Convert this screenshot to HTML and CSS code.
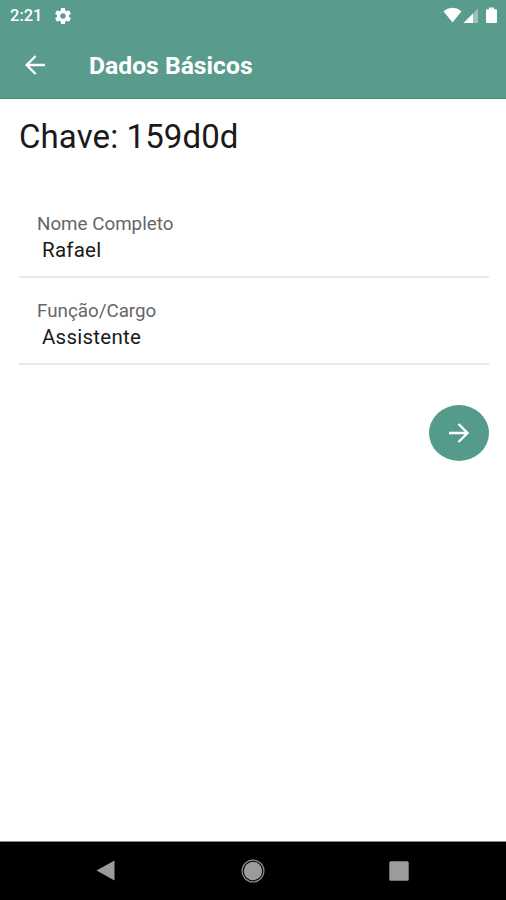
FILE: index.html
```html
<!DOCTYPE html>
<html lang="pt-BR">
  <head>
    <meta charset="UTF-8" />
    <meta name="viewport" content="width=device-width, initial-scale=1.0" />
    <title>Dados Básicos</title>
    <link rel="stylesheet" href="styles.css">
  </head>
  <body>
    <header>
      <div class="status-bar">
        <span class="time">2:21</span>
        <svg class="gear" viewBox="2 2 20 20" width="16" height="16"><path fill="#fff" d="M19.43 12.98c.04-.32.07-.64.07-.98s-.03-.66-.07-.98l2.11-1.65c.19-.15.24-.42.12-.64l-2-3.46c-.12-.22-.39-.3-.61-.22l-2.49 1c-.52-.4-1.08-.73-1.69-.98l-.38-2.65C14.46 2.18 14.25 2 14 2h-4c-.25 0-.46.18-.49.42l-.38 2.65c-.61.25-1.17.59-1.69.98l-2.49-1c-.23-.09-.49 0-.61.22l-2 3.46c-.13.22-.07.49.12.64l2.11 1.65c-.04.32-.07.65-.07.98s.03.66.07.98l-2.11 1.65c-.19.15-.24.42-.12.64l2 3.46c.12.22.39.3.61.22l2.49-1c.52.4 1.08.73 1.69.98l.38 2.65c.03.24.24.42.49.42h4c.25 0 .46-.18.49-.42l.38-2.65c.61-.25 1.17-.59 1.69-.98l2.49 1c.23.09.49 0 .61-.22l2-3.46c.12-.22.07-.49-.12-.64l-2.11-1.65zM12 15.5c-1.93 0-3.5-1.57-3.5-3.5s1.57-3.5 3.5-3.5 3.5 1.57 3.5 3.5-1.57 3.5-3.5 3.5z"/></svg>
        <svg class="signals" viewBox="0 0 56 18" width="56" height="18">
          <path fill="#fff" d="M0.5 4.2Q9.5-2.6 18.5 4.2L9.5 15.5z"/>
          <path fill="#fff" fill-opacity=".4" d="M20.5 16L35 1.5V16z"/>
          <path fill="#fff" d="M20.5 16L30 6.5V16z"/>
          <path fill="#fff" d="M44 2.2h2V0.5h5v1.7h2q1 0 1 1V15q0 1-1 1h-9q-1 0-1-1V3.2q0-1 1-1z"/>
        </svg>
      </div>
      <div class="title-bar">
        <svg class="back" viewBox="0 0 20 20" width="20" height="20"><path fill="none" stroke="#fff" stroke-width="2.3" d="M20 10H2M10.6 1L1.6 10l9 9"/></svg>
        <h1>Dados Básicos</h1>
      </div>
    </header>
    <main>
      <h2>Chave: 159d0d</h2>
      <div class="field">
        <span class="label">Nome Completo</span>
        <span class="value">Rafael</span>
      </div>
      <div class="field">
        <span class="label">Função/Cargo</span>
        <span class="value">Assistente</span>
      </div>
      <div class="next">
        <svg viewBox="0 0 20 20" width="20" height="20"><path fill="none" stroke="#fff" stroke-width="2.4" d="M0 10H18M9.5 1l9 9-9 9"/></svg>
      </div>
    </main>
    <footer>
      <svg viewBox="0 0 20 22" width="20" height="22"><path fill="#9b9b9b" d="M18.5 0.5v20L0.5 10.5z"/></svg>
      <svg viewBox="0 0 24 24" width="24" height="24"><circle cx="12" cy="12" r="10.9" fill="none" stroke="#8c8c8c" stroke-width="1.2"/><circle cx="12" cy="12" r="9.2" fill="#9b9b9b"/></svg>
      <svg viewBox="0 0 20 20" width="20" height="20"><rect x="0.3" y="0.3" width="19.4" height="19.4" rx="1.5" fill="#9b9b9b"/></svg>
    </footer>
  </body>
</html>
```

FILE: styles.css
```css
body {
  font-family: Roboto, "Liberation Sans", sans-serif;
  margin: 0;
  display: flex;
  flex-direction: column;
  height: 100vh;
  background-color: #fff;
  color: #1a1a1a;
  overflow: hidden;
}
svg {
  display: block;
  flex: none;
}
header {
  background-color: #599c8d;
  color: white;
  height: 99px;
  box-sizing: border-box;
  border-bottom: 1px solid #3f8a79;
}
.status-bar {
  display: flex;
  align-items: center;
  height: 31px;
  padding: 0 7px 0 10px;
}
.time {
  font-size: 16.5px;
  font-weight: 500;
  width: 45px;
}
.signals {
  margin-left: auto;
}
.title-bar {
  display: flex;
  align-items: center;
  height: 67px;
  padding-left: 25px;
}
h1 {
  margin: 3px 0 0 44px;
  font-size: 24.7px;
  font-weight: 700;
  line-height: 30px;
}
main {
  flex: 1;
  display: flex;
  flex-direction: column;
  padding: 18px 17px 0 19px;
}
h2 {
  margin: 0 0 54px;
  font-size: 33px;
  font-weight: 400;
  line-height: 40px;
  letter-spacing: 0.1px;
}
.field {
  display: flex;
  flex-direction: column;
  height: 65px;
  margin-bottom: 20px;
  padding-left: 18px;
  border-bottom: 2px solid #e8e8e8;
}
.label {
  font-size: 18.8px;
  line-height: 26px;
  color: #666;
}
.value {
  padding-left: 5px;
  font-size: 20.5px;
  line-height: 26px;
  letter-spacing: 0.25px;
}
.next {
  display: flex;
  align-items: center;
  justify-content: center;
  align-self: flex-end;
  width: 60px;
  height: 56px;
  margin-top: 20px;
  border-radius: 50%;
  background-color: #559b8b;
}
footer {
  display: flex;
  align-items: center;
  justify-content: space-between;
  height: 59px;
  box-sizing: border-box;
  padding: 0 97px 0 96px;
  border-top: 1px solid #888;
  background-color: #000;
}
```
